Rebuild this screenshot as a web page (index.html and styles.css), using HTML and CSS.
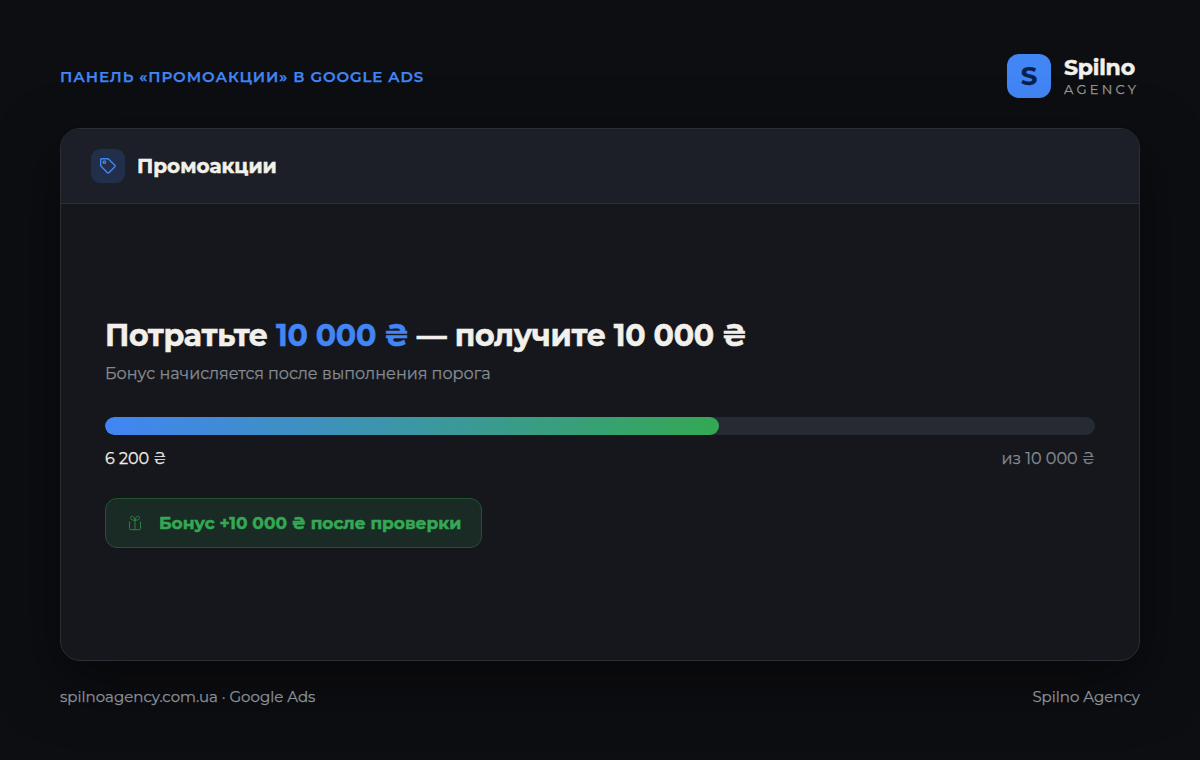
FILE: index.html
```html
<!DOCTYPE html>
<html lang="ru">
<head>
    <meta charset="UTF-8">
    <meta name="viewport" content="width=device-width, initial-scale=1.0">
    <title>Промоакции - Spilno Agency</title>
    <link rel="stylesheet" href="styles.css">
</head>
<body>
    <div class="page">
        <header class="top">
            <div class="eyebrow">Панель «Промоакции» в Google Ads</div>
            <div class="brand">
                <div class="brand-mark">S</div>
                <div class="brand-text">
                    <div class="brand-name">Spilno</div>
                    <div class="brand-sub">AGENCY</div>
                </div>
            </div>
        </header>

        <main class="card">
            <div class="card-header">
                <div class="card-icon">
                    <svg viewBox="0 0 18 18" width="18" height="18" fill="none" stroke="currentColor" stroke-width="1.4" stroke-linejoin="round">
                        <path d="M1.7 2.7a1 1 0 0 1 1-1h5.9a1.5 1.5 0 0 1 1.1.45l6.1 6.1a1 1 0 0 1 0 1.5l-5.9 5.9a1 1 0 0 1-1.5 0l-6.25-6.3a1.5 1.5 0 0 1-.45-1.1z"/>
                        <circle cx="5.4" cy="5.2" r="1.2"/>
                    </svg>
                </div>
                <h2>Промоакции</h2>
            </div>

            <div class="card-body">
                <h1>Потратьте <span class="accent">10 000 ₴</span> — получите 10 000 ₴</h1>
                <p class="note">Бонус начисляется после выполнения порога</p>

                <div class="progress">
                    <div class="progress-fill" style="width: 62%"></div>
                </div>
                <div class="progress-labels">
                    <span class="current">6 200 ₴</span>
                    <span class="total">из 10 000 ₴</span>
                </div>

                <div class="bonus">
                    <svg viewBox="0 0 14 16" width="14" height="16" fill="none" stroke="currentColor" stroke-width="0.9" stroke-linecap="round" stroke-linejoin="round">
                        <path d="M1.5 7v6.5a1.2 1.2 0 0 0 1.2 1.2h8.6a1.2 1.2 0 0 0 1.2-1.2V7M7 5v9.5"/>
                        <path d="M7 5C6.5 2.6 5.3 1.2 3.9 1.2 1.9 1.2 1.9 4.7 4 4.9zM7 5c.5-2.4 1.7-3.8 3.1-3.8 2 0 2 3.5-.1 3.7z"/>
                    </svg>
                    <span>Бонус +10 000 ₴ после проверки</span>
                </div>
            </div>
        </main>

        <footer class="bottom">
            <span class="site">spilnoagency.com.ua · Google Ads</span>
            <span class="agency">Spilno Agency</span>
        </footer>
    </div>
</body>
</html>
```
FILE: styles.css
```css
* {
    box-sizing: border-box;
}

body {
    margin: 0;
    background-color: #0d0e12;
    color: #f2f0ea;
    font-family: Montserrat, Inter, sans-serif;
    -webkit-text-stroke: 0.25px currentColor;
}

.page {
    height: 760px;
    padding: 54px 60px 50px;
    display: flex;
    flex-direction: column;
    overflow: hidden;
}

.top {
    height: 44px;
    margin-bottom: 30px;
    display: flex;
    justify-content: space-between;
    align-items: center;
}

.eyebrow {
    padding-top: 1px;
    color: #4285f4;
    font-size: 15px;
    font-weight: 600;
    letter-spacing: 0.06em;
    text-transform: uppercase;
    white-space: nowrap;
}

.brand {
    display: flex;
    align-items: center;
    gap: 13px;
}

.brand-mark {
    width: 44px;
    height: 44px;
    border-radius: 12px;
    background-color: #4285f4;
    color: #06214f;
    font-size: 26px;
    font-weight: 700;
    line-height: 44px;
    text-align: center;
}

.brand-text {
    width: 76px;
}

.brand-name {
    font-size: 22px;
    font-weight: 700;
    line-height: 26px;
    letter-spacing: -0.01em;
}

.brand-sub {
    color: #9a9a98;
    font-size: 13px;
    line-height: 17px;
    letter-spacing: 0.25em;
}

.card {
    height: 533px;
    border: 1px solid #2c2e33;
    border-radius: 20px;
    background-color: #16171c;
    box-shadow: 0 20px 60px rgba(0, 0, 0, 0.5);
    display: flex;
    flex-direction: column;
    overflow: hidden;
}

.card-header {
    height: 75px;
    padding: 0 30px;
    border-bottom: 1px solid #2c2e33;
    background-color: #1c1f27;
    display: flex;
    align-items: center;
    gap: 12px;
}

.card-icon {
    width: 34px;
    height: 34px;
    border-radius: 9px;
    background-color: #212f4b;
    color: #4285f4;
    display: flex;
    align-items: center;
    justify-content: center;
}

h1, h2, .brand-name, .bonus {
    -webkit-text-stroke-width: 0.5px;
}

h2 {
    margin: 0;
    font-size: 20px;
    font-weight: 700;
}

.card-body {
    flex: 1;
    padding: 0 44px;
    display: flex;
    flex-direction: column;
    justify-content: center;
    align-items: flex-start;
}

h1 {
    margin: 0;
    padding-top: 1px;
    font-size: 30px;
    font-weight: 700;
    line-height: 38px;
    letter-spacing: -0.01em;
    white-space: nowrap;
}

.accent {
    color: #4285f4;
}

.note {
    margin: 9px 0 33px;
    color: #858b91;
    font-size: 16px;
    line-height: 20px;
    white-space: nowrap;
}

.progress {
    width: 100%;
    height: 18px;
    border-radius: 9px;
    background-color: #262a33;
    overflow: hidden;
}

.progress-fill {
    height: 100%;
    border-radius: 9px;
    background: linear-gradient(90deg, #4285f4, #34a853);
}

.progress-labels {
    width: 100%;
    margin: 14px 0 29px;
    display: flex;
    justify-content: space-between;
    font-size: 16px;
    line-height: 20px;
}

.total {
    color: #858b91;
}

.bonus {
    width: 377px;
    height: 50px;
    padding: 0 22px;
    border: 1px solid #21542f;
    border-radius: 12px;
    background-color: #1a2b26;
    color: #34a853;
    display: flex;
    align-items: center;
    gap: 17px;
    font-size: 17px;
    font-weight: 700;
    white-space: nowrap;
}

.bonus svg {
    flex: none;
    opacity: 0.75;
}

.bottom {
    margin-top: 26px;
    display: flex;
    justify-content: space-between;
    color: #8a9096;
    font-size: 15px;
    line-height: 20px;
}
```
